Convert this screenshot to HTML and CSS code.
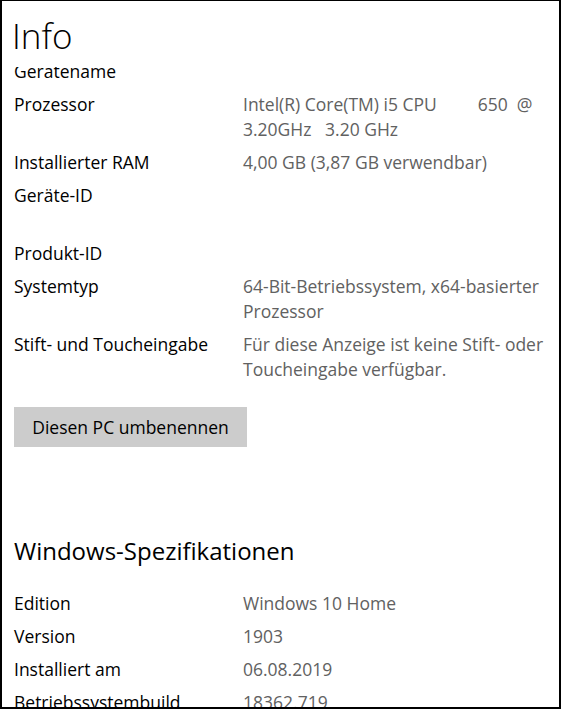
FILE: index.html
```html
<!DOCTYPE html>
<html lang="de">
<head>
<meta charset="utf-8">
<title>Info</title>
<link rel="stylesheet" href="styles.css">
</head>
<body>
<div class="window">
  <header class="header">
    <h1 class="title">Info</h1>
  </header>
  <main class="content">
    <dl class="specs">
      <div class="row"><dt>Gerätename</dt><dd></dd></div>
      <div class="row"><dt>Prozessor</dt><dd>Intel(R) Core(TM) i5 CPU         650  @ 3.20GHz   3.20 GHz</dd></div>
      <div class="row"><dt>Installierter RAM</dt><dd>4,00 GB (3,87 GB verwendbar)</dd></div>
      <div class="row"><dt>Geräte-ID</dt><dd class="two-lines"></dd></div>
      <div class="row"><dt>Produkt-ID</dt><dd></dd></div>
      <div class="row"><dt>Systemtyp</dt><dd>64-Bit-Betriebssystem, x64-basierter Prozessor</dd></div>
      <div class="row"><dt>Stift- und Toucheingabe</dt><dd>Für diese Anzeige ist keine Stift- oder Toucheingabe verfügbar.</dd></div>
    </dl>
    <button class="btn" type="button">Diesen PC umbenennen</button>
    <h2 class="section-title">Windows-Spezifikationen</h2>
    <dl class="specs">
      <div class="row"><dt>Edition</dt><dd>Windows 10 Home</dd></div>
      <div class="row"><dt>Version</dt><dd>1903</dd></div>
      <div class="row"><dt>Installiert am</dt><dd>06.08.2019</dd></div>
      <div class="row"><dt>Betriebssystembuild</dt><dd>18362.719</dd></div>
    </dl>
  </main>
</div>
</body>
</html>
```
FILE: styles.css
```css
html, body {
  margin: 0;
  padding: 0;
  background: #fff;
}

.window {
  box-sizing: border-box;
  width: 561px;
  height: 709px;
  border-style: solid;
  border-color: #000;
  border-width: 1px 2px 2px 2px;
  overflow: hidden;
  display: flex;
  flex-direction: column;
  font-family: "Segoe UI", "Open Sans", "Noto Sans", sans-serif;
  color: #000;
}

.header {
  position: relative;
  z-index: 1;
  background: #fff;
  height: 66px;
  flex: none;
  padding: 15px 0 0 10px;
  box-sizing: border-box;
}

.title {
  margin: 0;
  font-size: 35px;
  line-height: 40px;
  font-weight: 300;
}

.content {
  margin-top: -8px;
  padding: 0 12px;
  display: flex;
  flex-direction: column;
  align-items: flex-start;
}

.specs {
  margin: 0;
  display: flex;
  flex-direction: column;
  gap: 8px;
  width: 100%;
}

.row {
  display: grid;
  grid-template-columns: 229px 312px;
  font-size: 17.5px;
  line-height: 25px;
}

.row dt {
  margin: 0;
}

.row dd {
  margin: 0;
  color: #616161;
  white-space: pre-wrap;
  min-height: 25px;
}

.row dd.two-lines {
  min-height: 50px;
}

.btn {
  margin-top: 25px;
  width: 233px;
  height: 40px;
  border: none;
  background: #cccccc;
  color: #000;
  font-family: inherit;
  font-size: 17.5px;
  padding: 0;
}

.section-title {
  margin: 88px 0 0;
  font-size: 24px;
  line-height: 32px;
  font-weight: 400;
}

.section-title + .specs {
  margin-top: 24px;
}
```
